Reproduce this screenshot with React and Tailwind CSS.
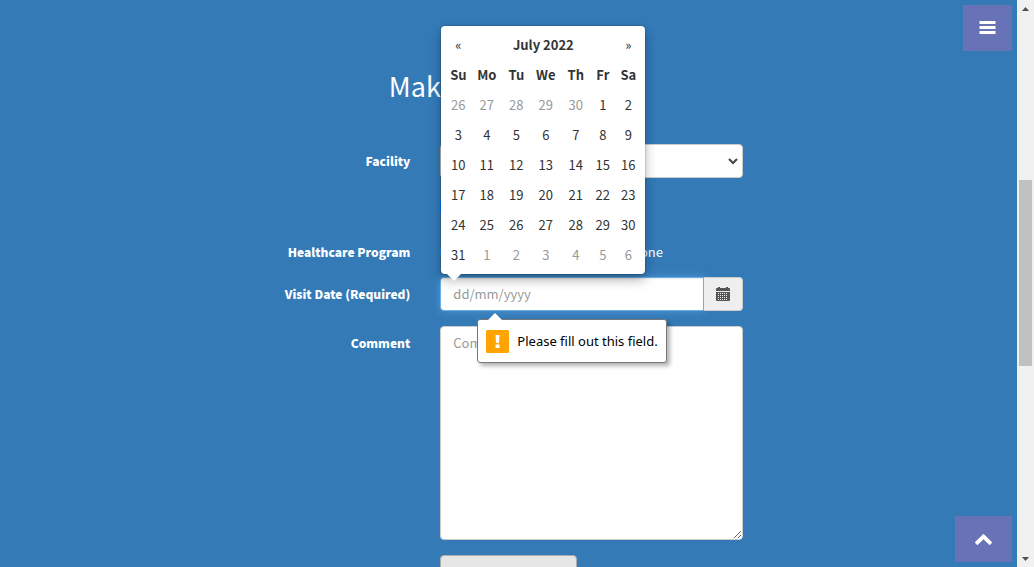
import React from "react";

const WEEKDAYS = ["Su", "Mo", "Tu", "We", "Th", "Fr", "Sa"];
const COLUMNS = ["w-[26px]", "w-[31px]", "w-[28px]", "w-[31px]", "w-[29px]", "w-[25px]", "w-[26px]"];

// Six weeks, starting on Sunday 26 June 2022.
const WEEKS = Array.from({ length: 6 }, (_, week) =>
  Array.from({ length: 7 }, (_, day) => {
    const date = new Date(2022, 5, 26 + week * 7 + day);
    return { number: date.getDate(), outside: date.getMonth() !== 6 };
  })
);

function Row({ label, htmlFor, children }) {
  return (
    <div className="mb-[15px] grid grid-cols-3">
      {label ? (
        <label htmlFor={htmlFor} className="self-start justify-self-end px-[15px] pt-[7px] text-right text-[12px] leading-5 font-black whitespace-nowrap">
          {label}
        </label>
      ) : null}
      <div className={label ? "col-span-2 px-[15px]" : "col-span-2 col-start-2 px-[15px]"}>{children}</div>
    </div>
  );
}

function DatePicker() {
  return (
    <div className="absolute bottom-full left-0 z-20 mb-[3px] ml-px rounded bg-white p-1 text-[#333] shadow-[0_6px_12px_rgba(0,0,0,0.3),0_0_2px_rgba(0,0,0,0.4)]">
      <table className="table-fixed border-collapse text-center">
        <colgroup>
          {COLUMNS.map((width, i) => (
            <col key={i} className={width} />
          ))}
        </colgroup>
        <thead>
          <tr className="h-[30px]">
            <th className="p-0 font-normal">
              <button type="button" aria-label="Previous month">«</button>
            </th>
            <th colSpan={5} className="p-0 font-bold">
              <button type="button">July 2022</button>
            </th>
            <th className="p-0 font-normal">
              <button type="button" aria-label="Next month">»</button>
            </th>
          </tr>
          <tr className="h-[30px]">
            {WEEKDAYS.map((day) => (
              <th key={day} className="p-0 font-bold">{day}</th>
            ))}
          </tr>
        </thead>
        <tbody>
          {WEEKS.map((week, i) => (
            <tr key={i} className="h-[30px]">
              {week.map(({ number, outside }, j) => (
                <td key={j} className={outside ? "p-0 text-[#999]" : "p-0"}>
                  <button type="button">{number}</button>
                </td>
              ))}
            </tr>
          ))}
        </tbody>
      </table>
      <svg className="absolute top-full left-1 h-[7px] w-[18px]" viewBox="0 0 18 7" aria-hidden="true">
        <path d="M2 0h14L9 7z" fill="#fff" />
      </svg>
    </div>
  );
}

function ValidationBubble() {
  return (
    <div
      role="alert"
      className="absolute top-full left-[37px] z-20 mt-2 flex h-[44px] items-center gap-2 rounded-[3px] border border-[#777] bg-white px-2 font-['Noto_Sans',sans-serif] text-[13px] whitespace-nowrap text-black shadow-[3px_3px_4px_rgba(0,0,0,0.3)]"
    >
      <svg className="absolute bottom-full left-2 -mb-px h-[9px] w-[18px]" viewBox="0 0 18 9" aria-hidden="true">
        <path d="M1 9 9 1l8 8z" fill="#fff" />
      </svg>
      <svg className="size-[23px]" viewBox="0 0 23 23" aria-hidden="true">
        <rect width="23" height="23" rx="1.5" fill="#ffa400" />
        <path d="M9.5 5h4l-.5 8h-3zM9.5 14.5h4V18h-4z" fill="#fff" />
      </svg>
      <span>Please fill out this field.</span>
    </div>
  );
}

function CalendarIcon() {
  return (
    <svg className="size-[14px]" viewBox="0 0 14 14" aria-hidden="true">
      <path d="M1 1h1V0h2v1h6V0h2v1h1a1 1 0 0 1 1 1v2H0V2a1 1 0 0 1 1-1z" fill="#555" />
      <path d="M0 5h14v8a1 1 0 0 1-1 1H1a1 1 0 0 1-1-1z" fill="#555" />
      <path d="M2 6.5h10M2 8.5h10M2 10.5h10M2 12.5h10" stroke="#eee" strokeDasharray="1 1" fill="none" />
    </svg>
  );
}

function Scrollbar() {
  return (
    <div className="flex w-[17px] shrink-0 flex-col items-center bg-[#f1f1f1]" aria-hidden="true">
      <svg className="h-[17px] w-[17px]" viewBox="0 0 17 17">
        <path d="M5 11l3.5-4 3.5 4z" fill="#505050" />
      </svg>
      <div className="flex min-h-0 w-full flex-1 flex-col items-center">
        <div className="grow-[163]" />
        <div className="w-[13px] grow-[186] bg-[#c1c1c1]" />
        <div className="grow-[184]" />
      </div>
      <svg className="h-[17px] w-[17px]" viewBox="0 0 17 17">
        <path d="M5 7l3.5 4L12 7z" fill="#505050" />
      </svg>
    </div>
  );
}

export default function App() {
  return (
    <div className="flex h-screen overflow-hidden bg-[#337ab7] font-['Noto_Sans_CJK_SC',sans-serif] text-[13px] leading-5 text-white">
      <main className="relative min-w-0 flex-1 overflow-hidden pt-[69px]">
        <h2 className="mb-[42px] text-center text-[27px] leading-[33px]">Make Appointment</h2>
        <form className="mx-auto w-full max-w-[499px]" noValidate>
          <Row label="Facility" htmlFor="facility">
            <div className="relative">
              <select
                id="facility"
                className="block h-[34px] w-full appearance-none rounded border border-[#ccc] bg-white px-3 text-[#555]"
              >
                <option>Tokyo CURA Healthcare Center</option>
                <option>Hongkong CURA Healthcare Center</option>
                <option>Seoul CURA Healthcare Center</option>
              </select>
              <svg className="pointer-events-none absolute top-3 right-1 h-[10px] w-3" viewBox="0 0 12 10" aria-hidden="true">
                <path d="M2 3l4 4 4-4" fill="none" stroke="#444" strokeWidth="2" />
              </svg>
            </div>
          </Row>
          <Row>
            <label className="flex h-[27px] items-center gap-[7px] whitespace-nowrap">
              <input type="checkbox" defaultChecked className="size-[13px]" />
              Apply for hospital readmission
            </label>
          </Row>
          <Row label="Healthcare Program" htmlFor="medicare">
            <div className="flex gap-[10px] pt-[7px]">
              <label className="flex items-center gap-[7px]">
                <input id="medicare" type="radio" name="program" defaultChecked className="size-[13px]" />
                Medicare
              </label>
              <label className="flex items-center gap-[7px]">
                <input type="radio" name="program" className="size-[13px]" />
                Medicaid
              </label>
              <label className="flex items-center gap-[7px]">
                <input type="radio" name="program" className="size-[13px]" />
                None
              </label>
            </div>
          </Row>
          <Row label="Visit Date (Required)" htmlFor="visit-date">
            <div className="relative flex">
              <input
                id="visit-date"
                type="text"
                placeholder="dd/mm/yyyy"
                required
                className="h-[34px] min-w-0 flex-1 rounded-l border border-[#66afe9] bg-white px-3 pb-[2px] text-[#555] shadow-[inset_0_1px_1px_rgba(0,0,0,0.08),0_0_8px_rgba(102,175,233,0.6)] outline-none placeholder:text-[#999]"
              />
              <button
                type="button"
                aria-label="Open calendar"
                className="flex h-[34px] w-[39px] items-center justify-center rounded-r border border-l-0 border-[#ccc] bg-[#eee]"
              >
                <CalendarIcon />
              </button>
              <DatePicker />
              <ValidationBubble />
            </div>
          </Row>
          <Row label="Comment" htmlFor="comment">
            <textarea
              id="comment"
              placeholder="Comment"
              className="block h-[214px] w-full resize-y rounded border border-[#ccc] bg-white px-3 py-[6px] text-[#555] placeholder:text-[#999]"
            />
          </Row>
          <Row>
            <button
              type="submit"
              className="h-[45px] w-[137px] rounded border border-[#adadad] bg-[#e6e6e6] whitespace-nowrap text-[#333]"
            >
              Book Appointment
            </button>
          </Row>
        </form>
        <button
          type="button"
          aria-label="Menu"
          className="absolute top-[5px] right-[5px] flex h-[46px] w-[49px] items-center justify-center bg-[#6772b7]"
        >
          <svg className="h-[14px] w-[17px]" viewBox="0 0 17 14" aria-hidden="true">
            <path d="M.5 0h16v3H.5zM.5 5h16v3H.5zM.5 10h16v3H.5z" fill="#fff" />
          </svg>
        </button>
        <a
          href="#top"
          aria-label="Back to top"
          className="absolute right-[5px] bottom-[5px] flex h-[46px] w-[57px] items-center justify-center bg-[#6772b7]"
        >
          <svg className="h-[11px] w-[17px]" viewBox="90 147 1612 1035" aria-hidden="true">
            <path
              transform="matrix(1 0 0 -1 0 1329)"
              d="M1683 331l-166 -165q-19 -19 -45 -19t-45 19l-531 531l-531 -531q-19 -19 -45 -19t-45 19l-166 165q-19 19 -19 45.5t19 45.5l742 741q19 19 45 19t45 -19l742 -741q19 -19 19 -45.5t-19 -45.5z"
              fill="#fff"
            />
          </svg>
        </a>
      </main>
      <Scrollbar />
    </div>
  );
}
